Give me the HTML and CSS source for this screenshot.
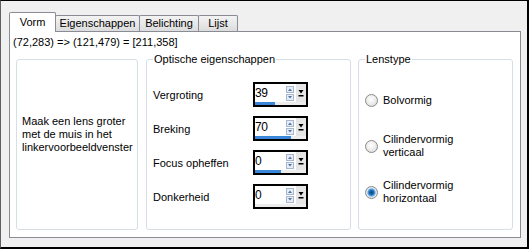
FILE: index.html
```html
<!DOCTYPE html>
<html lang="nl">
<head>
<meta charset="utf-8">
<title>Lens</title>
<link rel="stylesheet" href="styles.css">
</head>
<body>
<div class="window">
  <div class="tabs">
    <div class="tab active tab-vorm">Vorm</div>
    <div class="tab tab-eig">Eigenschappen</div>
    <div class="tab tab-bel">Belichting</div>
    <div class="tab tab-lijst">Lijst</div>
  </div>
  <div class="panel">
    <div class="coords">(72,283) =&gt; (121,479) = [211,358]</div>
    <div class="groups">
      <div class="group info">
        <p>Maak een lens groter<br>met de muis in het<br>linkervoorbeeldvenster</p>
      </div>
      <fieldset class="group optics">
        <legend>Optische eigenschappen</legend>
        <div class="row">
          <span class="label">Vergroting</span>
          <div class="spin">
            <div class="spin-main">
              <span class="val">39</span>
              <span class="arrows"><svg width="8" height="15" viewBox="0 0 8 15"><rect x="0.5" y="0.5" width="7" height="6" fill="#e6edf6" stroke="#a7b7cc"/><path d="M2 5h4L4 2.6z" fill="#5373a0"/><rect x="0.5" y="8.5" width="7" height="6" fill="#e6edf6" stroke="#a7b7cc"/><path d="M2 10h4L4 12.4z" fill="#5373a0"/></svg></span>
              <span class="drop"><svg width="6" height="8" viewBox="0 0 6 8"><path d="M0.5 1h5L3 4.5z" fill="#000"/><rect x="0.5" y="6" width="5" height="1.5" fill="#000"/></svg></span>
            </div>
            <div class="track"><div class="fill" style="width:39%"></div></div>
          </div>
        </div>
        <div class="row">
          <span class="label">Breking</span>
          <div class="spin">
            <div class="spin-main">
              <span class="val">70</span>
              <span class="arrows"><svg width="8" height="15" viewBox="0 0 8 15"><rect x="0.5" y="0.5" width="7" height="6" fill="#e6edf6" stroke="#a7b7cc"/><path d="M2 5h4L4 2.6z" fill="#5373a0"/><rect x="0.5" y="8.5" width="7" height="6" fill="#e6edf6" stroke="#a7b7cc"/><path d="M2 10h4L4 12.4z" fill="#5373a0"/></svg></span>
              <span class="drop"><svg width="6" height="8" viewBox="0 0 6 8"><path d="M0.5 1h5L3 4.5z" fill="#000"/><rect x="0.5" y="6" width="5" height="1.5" fill="#000"/></svg></span>
            </div>
            <div class="track"><div class="fill" style="width:70%"></div></div>
          </div>
        </div>
        <div class="row">
          <span class="label">Focus opheffen</span>
          <div class="spin">
            <div class="spin-main">
              <span class="val">0</span>
              <span class="arrows"><svg width="8" height="15" viewBox="0 0 8 15"><rect x="0.5" y="0.5" width="7" height="6" fill="#e6edf6" stroke="#a7b7cc"/><path d="M2 5h4L4 2.6z" fill="#5373a0"/><rect x="0.5" y="8.5" width="7" height="6" fill="#e6edf6" stroke="#a7b7cc"/><path d="M2 10h4L4 12.4z" fill="#5373a0"/></svg></span>
              <span class="drop"><svg width="6" height="8" viewBox="0 0 6 8"><path d="M0.5 1h5L3 4.5z" fill="#000"/><rect x="0.5" y="6" width="5" height="1.5" fill="#000"/></svg></span>
            </div>
            <div class="track"><div class="fill" style="width:50%"></div></div>
          </div>
        </div>
        <div class="row">
          <span class="label">Donkerheid</span>
          <div class="spin">
            <div class="spin-main">
              <span class="val">0</span>
              <span class="arrows"><svg width="8" height="15" viewBox="0 0 8 15"><rect x="0.5" y="0.5" width="7" height="6" fill="#e6edf6" stroke="#a7b7cc"/><path d="M2 5h4L4 2.6z" fill="#5373a0"/><rect x="0.5" y="8.5" width="7" height="6" fill="#e6edf6" stroke="#a7b7cc"/><path d="M2 10h4L4 12.4z" fill="#5373a0"/></svg></span>
              <span class="drop"><svg width="6" height="8" viewBox="0 0 6 8"><path d="M0.5 1h5L3 4.5z" fill="#000"/><rect x="0.5" y="6" width="5" height="1.5" fill="#000"/></svg></span>
            </div>
            <div class="track"><div class="fill" style="width:0%"></div></div>
          </div>
        </div>
      </fieldset>
      <fieldset class="group lens">
        <legend>Lenstype</legend>
        <div class="radio"><span class="dot"></span><span class="rtext">Bolvormig</span></div>
        <div class="radio"><span class="dot"></span><span class="rtext">Cilindervormig<br>verticaal</span></div>
        <div class="radio"><span class="dot checked"></span><span class="rtext">Cilindervormig<br>horizontaal</span></div>
      </fieldset>
    </div>
  </div>
</div>
</body>
</html>
```
FILE: styles.css
```css
* { box-sizing: border-box; }
html, body { margin: 0; padding: 0; }
body {
  width: 529px;
  height: 249px;
  overflow: hidden;
  background: #f0f0f0;
  font-family: "Liberation Sans", Arial, sans-serif;
  font-size: 11px;
  color: #000;
}
.window {
  width: 529px;
  height: 249px;
  background: #f0f0f0;
  border-top: 1px solid #000;
  border-left: 1px solid #5f5f5f;
  border-right: 2px solid #000;
  border-bottom: 2px solid #000;
}
.tabs {
  display: flex;
  align-items: flex-end;
  height: 30px;
  padding-left: 8px;
}
.tab {
  height: 16px;
  margin-left: -1px;
  border: 1px solid #898c95;
  border-bottom: none;
  border-radius: 2px 2px 0 0;
  background: linear-gradient(#f3f3f3, #e8e8e8 50%, #dcdcdc);
  display: flex;
  align-items: center;
  justify-content: center;
  line-height: 13px;
  white-space: nowrap;
}
.tab.active {
  height: 20px;
  margin-left: 0;
  margin-bottom: -1px;
  background: #fff;
  position: relative;
  z-index: 1;
}
.tab-vorm { width: 47px; }
.tab-eig { width: 85px; }
.tab-bel { width: 60px; }
.tab-lijst { width: 40px; }
.panel {
  margin-left: 8px;
  width: 512px;
  height: 207px;
  border: 1px solid #898c95;
  background: #fff;
}
.coords {
  margin-top: 4px;
  padding-left: 3px;
  line-height: 13px;
}
.groups {
  display: flex;
  margin-top: 4px;
  padding-left: 6px;
  height: 177px;
}
.group {
  border: 1px solid #d5dfe5;
  border-radius: 3px;
  margin: 0;
  min-width: 0;
}
.info {
  width: 122px;
  margin-top: 6px;
  padding: 55px 0 0 5px;
}
.info p {
  margin: 0;
  line-height: 13px;
}
fieldset.group {
  padding: 16px 0 0 6px;
}
legend {
  padding: 0 1px;
  margin-left: 0;
  line-height: 13px;
}
.optics { width: 205px; margin-left: 8px; }
.lens { width: 155px; margin-left: 7px; padding-top: 11px !important; }
.row {
  display: flex;
  align-items: center;
  height: 25px;
  margin-bottom: 9px;
}
.label { width: 100px; }
.spin {
  width: 55px;
  height: 25px;
  border: 2px solid #000;
  background: #fff;
  display: flex;
  flex-direction: column;
}
.spin-main {
  flex: 1;
  display: flex;
}
.val {
  flex: 1;
  font-size: 12px;
  line-height: 16px;
  padding: 1px 0 0 0;
  letter-spacing: -0.5px;
}
.arrows {
  width: 8px;
  margin-right: 2px;
  display: flex;
  align-items: center;
}
.arrows svg, .drop svg { display: block; }
.drop {
  width: 10px;
  background: #e6e6e6;
  display: flex;
  align-items: center;
  justify-content: center;
}
.track {
  height: 3px;
  background: #ededed;
}
.fill {
  height: 3px;
  background: #3a86d8;
}
.radio {
  display: flex;
  align-items: center;
  height: 46px;
}
.dot {
  flex: none;
  width: 13px;
  height: 13px;
  margin-right: 5px;
  border-radius: 50%;
  border: 1px solid #8a8a8a;
  background: radial-gradient(circle at 45% 40%, #ffffff 0, #f2f2f2 35%, #d4d4d4 100%);
}
.dot.checked {
  background: radial-gradient(circle at 50% 50%, #10467e 0, #1d66ad 2px, #58a3df 3.5px, #d9e8f5 4.5px, #e6e6e6 100%);
}
.rtext { line-height: 13px; }
```
